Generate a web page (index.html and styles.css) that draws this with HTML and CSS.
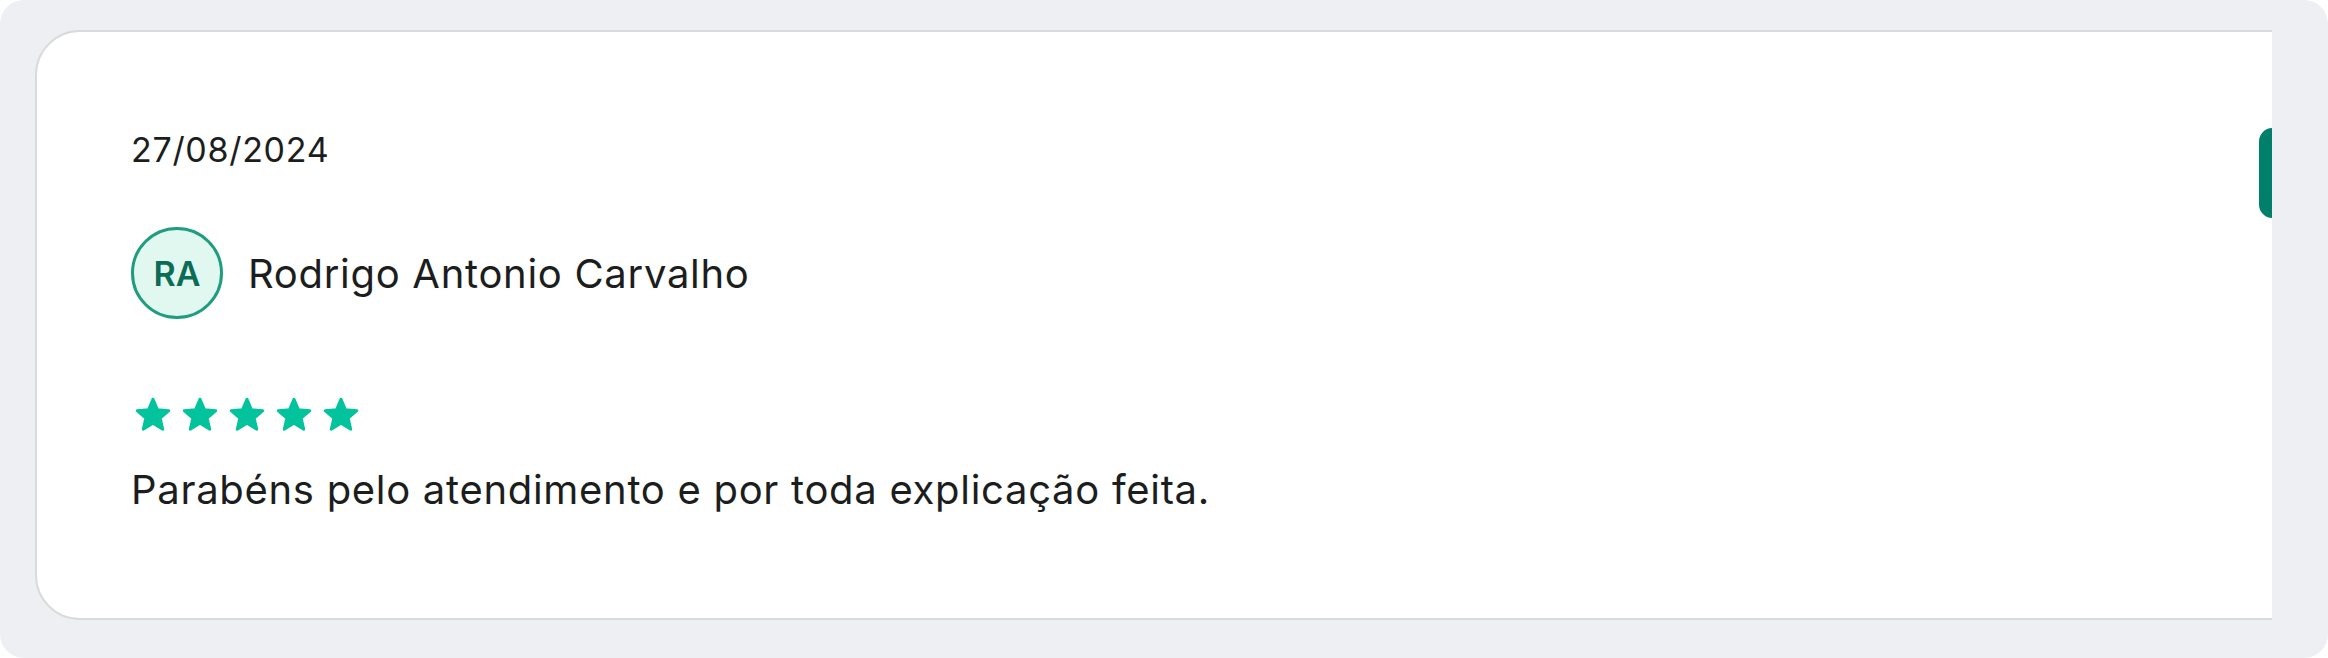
FILE: index.html
```html
<!DOCTYPE html>
<html lang="pt-BR">
<head>
    <meta charset="UTF-8">
    <title>Avaliações</title>
    <link rel="stylesheet" href="styles.css">
</head>
<body>
    <section class="reviews">
        <div class="reviews-track">
            <article class="review-card">
                <p class="review-date">27/08/2024</p>

                <div class="review-author">
                    <div class="avatar">RA</div>
                    <span class="author-name">Rodrigo Antonio Carvalho</span>
                </div>

                <div class="stars">
                    <svg viewBox="0 0 24 24"><path d="M12 17.27L18.18 21l-1.64-7.03L22 9.24l-7.19-.61L12 2 9.19 8.63 2 9.24l5.46 4.73L5.82 21z"/></svg>
                    <svg viewBox="0 0 24 24"><path d="M12 17.27L18.18 21l-1.64-7.03L22 9.24l-7.19-.61L12 2 9.19 8.63 2 9.24l5.46 4.73L5.82 21z"/></svg>
                    <svg viewBox="0 0 24 24"><path d="M12 17.27L18.18 21l-1.64-7.03L22 9.24l-7.19-.61L12 2 9.19 8.63 2 9.24l5.46 4.73L5.82 21z"/></svg>
                    <svg viewBox="0 0 24 24"><path d="M12 17.27L18.18 21l-1.64-7.03L22 9.24l-7.19-.61L12 2 9.19 8.63 2 9.24l5.46 4.73L5.82 21z"/></svg>
                    <svg viewBox="0 0 24 24"><path d="M12 17.27L18.18 21l-1.64-7.03L22 9.24l-7.19-.61L12 2 9.19 8.63 2 9.24l5.46 4.73L5.82 21z"/></svg>
                </div>

                <p class="review-text">Parabéns pelo atendimento e por toda explicação feita.</p>
            </article>

            <!-- next card peeking in -->
            <span class="next-tab"></span>
        </div>
    </section>
</body>
</html>
```

FILE: styles.css
```css
/* General Styles */
body {
    font-family: Inter, "Noto Sans", sans-serif;
    margin: 0;
    background-color: #ffffff;
    color: #1c1e1e;
    letter-spacing: 0.7px;
}

.reviews {
    height: 658px;
    box-sizing: border-box;
    padding: 30px 56px 38px 35px;
    background-color: #eeeff3;
    border-radius: 24px;
}

.reviews-track {
    position: relative;
    height: 100%;
    overflow: hidden;
}

.review-card {
    width: 2400px;
    height: 100%;
    box-sizing: border-box;
    padding: 97px 0 0 94px;
    background: white;
    border: 2px solid #d9dadb;
    border-radius: 45px;
}

.review-date {
    margin: 0;
    font-size: 34px;
    line-height: 41px;
}

.review-author {
    display: flex;
    align-items: center;
    gap: 25px;
    margin-top: 57px;
}

.avatar {
    width: 92px;
    height: 92px;
    box-sizing: border-box;
    display: flex;
    align-items: center;
    justify-content: center;
    border: 3px solid #1f9d80;
    border-radius: 50%;
    background-color: #e1f8f1;
    color: #0c6c56;
    font-size: 34px;
    font-weight: 600;
    letter-spacing: 0;
}

.author-name {
    font-size: 40px;
}

.stars {
    display: flex;
    gap: 9px;
    margin-top: 77px;
    margin-left: 3px;
}

.stars svg {
    width: 38px;
    height: 38px;
    fill: #03c39d;
    stroke: #03c39d;
    stroke-width: 1.8;
    stroke-linejoin: round;
}

.review-text {
    margin: 32px 0 0;
    font-size: 40px;
    line-height: 48px;
}

.next-tab {
    position: absolute;
    top: 98px;
    right: -14px;
    width: 27px;
    height: 90px;
    border-radius: 20px;
    background-color: #007f6a;
}
```
